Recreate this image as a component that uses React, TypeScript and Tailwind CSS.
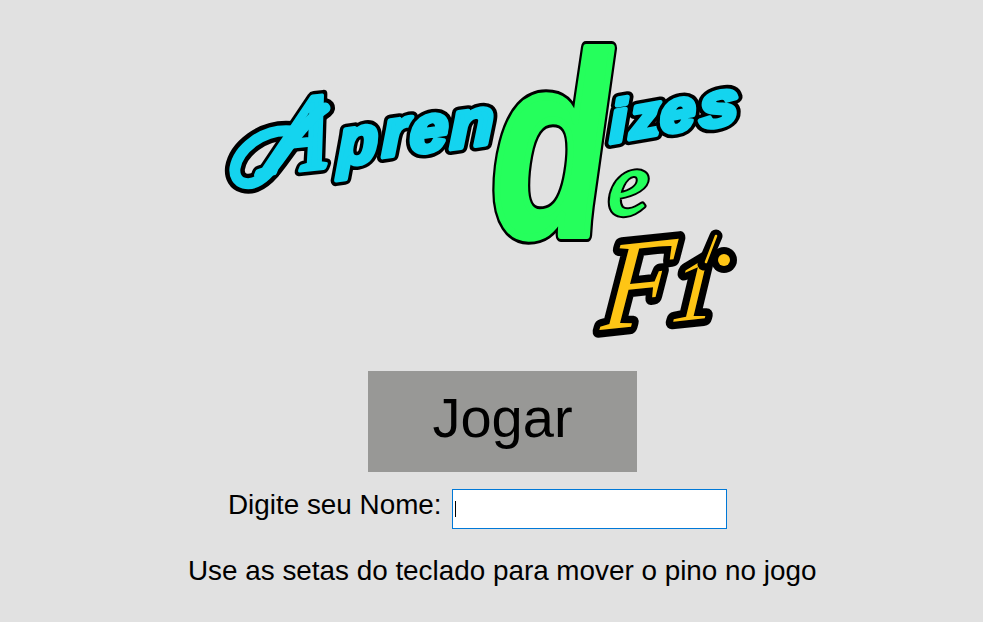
import React from 'react';

const serif = '"Liberation Serif", serif';
const sans = '"Liberation Sans", sans-serif';

type Glyph = { ch: string; x: number; y: number; size: number; rot: number; skew?: number; sx?: number; fam?: string; weight?: number };

const cyan: Glyph[] = [
  { ch: 'A', x: 262, y: 174, size: 108, rot: -6, skew: -18, sx: 0.95, fam: serif, weight: 400 },
  { ch: 'p', x: 338, y: 166, size: 66, rot: -8, skew: -8, sx: 1 },
  { ch: 'r', x: 382, y: 157, size: 66, rot: -8, skew: -8, sx: 1.05 },
  { ch: 'e', x: 410, y: 154, size: 66, rot: -8, skew: -8, sx: 1.05 },
  { ch: 'n', x: 450, y: 149, size: 66, rot: -8, skew: -8, sx: 1.1 },
  { ch: 'i', x: 610, y: 143, size: 58, rot: -10, skew: -8, sx: 1.1 },
  { ch: 'z', x: 630, y: 139, size: 58, rot: -10, skew: -8, sx: 1.1 },
  { ch: 'e', x: 661, y: 134, size: 58, rot: -10, skew: -8, sx: 1.1 },
  { ch: 's', x: 700, y: 129, size: 62, rot: -10, skew: -8, sx: 1.15 },
];

function Letter({ g, fill, outer, inner }: { g: Glyph; fill: string; outer: number; inner: number }) {
  const tf = `translate(${g.x} ${g.y}) rotate(${g.rot}) skewX(${g.skew ?? 0}) scale(${g.sx ?? 1} 1)`;
  const common = { transform: tf, fontFamily: g.fam ?? sans, fontSize: g.size, fontWeight: g.weight ?? 700, fontStyle: 'italic' as const, strokeLinejoin: 'round' as const };
  return (
    <>
      <text {...common} fill="#000" stroke="#000" strokeWidth={outer}>{g.ch}</text>
      <text {...common} fill={fill} stroke={fill} strokeWidth={inner}>{g.ch}</text>
    </>
  );
}

// swash on the left of the A
const swash = 'M292 131 C262 128 238 150 235 168 C233 184 250 190 266 175 C282 160 296 128 325 108';

function Logo() {
  return (
    <svg viewBox="0 0 983 345" width={983} height={345} className="block shrink-0">
      <path d={swash} fill="none" stroke="#000" strokeWidth={20} strokeLinecap="round" />
      {cyan.map((g, i) => <Letter key={i} g={g} fill="#14d4ef" outer={12} inner={5} />)}
      <path d={swash} fill="none" stroke="#14d4ef" strokeWidth={11} strokeLinecap="round" />
      <Letter g={{ ch: 'd', x: 492, y: 235, size: 258, rot: 0, skew: 0, sx: 0.74 }} fill="#25ff5c" outer={14} inner={8} />
      <Letter g={{ ch: 'e', x: 608, y: 216, size: 88, rot: -6, skew: -6, sx: 1.05, fam: serif, weight: 400 }} fill="#25ff5c" outer={6} inner={2} />
      <Letter g={{ ch: 'F', x: 600, y: 330, size: 126, rot: -6, skew: -12, sx: 0.9, fam: serif, weight: 400 }} fill="#fec515" outer={15} inner={0} />
      <Letter g={{ ch: '1', x: 670, y: 322, size: 90, rot: -6, skew: -10, sx: 1, fam: serif, weight: 400 }} fill="#fec515" outer={15} inner={0} />
      <path d="M716 236 L704 264" stroke="#000" strokeWidth={13} strokeLinecap="round" />
      <path d="M716 236 L706 262" stroke="#fec515" strokeWidth={2.5} strokeLinecap="round" />
      <circle cx="724" cy="260" r="13" fill="#000" />
      <circle cx="724" cy="260" r="6" fill="#fec515" />
    </svg>
  );
}

export default function App() {
  return (
    <div className="w-[983px] h-[622px] overflow-hidden bg-[#e1e1e1] text-black flex flex-col font-['Liberation_Sans',sans-serif]">
      <Logo />
      <button className="mt-[26px] ml-[368px] w-[269px] h-[101px] shrink-0 bg-[#989896] text-[56px] leading-none pb-2">
        Jogar
      </button>
      <div className="mt-[17px] ml-[228px] flex items-start">
        <label className="pt-px text-[27.85px] leading-[30px]">Digite seu Nome:</label>
        <div className="relative ml-[10px]">
          <input className="block w-[275px] h-[40px] bg-white border border-[#0078d7] outline-none caret-transparent" />
          <span className="absolute left-[3px] top-[12px] w-px h-4 bg-black" />
        </div>
      </div>
      <p className="mt-[27px] ml-[188px] text-[27.85px] leading-[30px] whitespace-nowrap">
        Use as setas do teclado para mover o pino no jogo
      </p>
    </div>
  );
}
